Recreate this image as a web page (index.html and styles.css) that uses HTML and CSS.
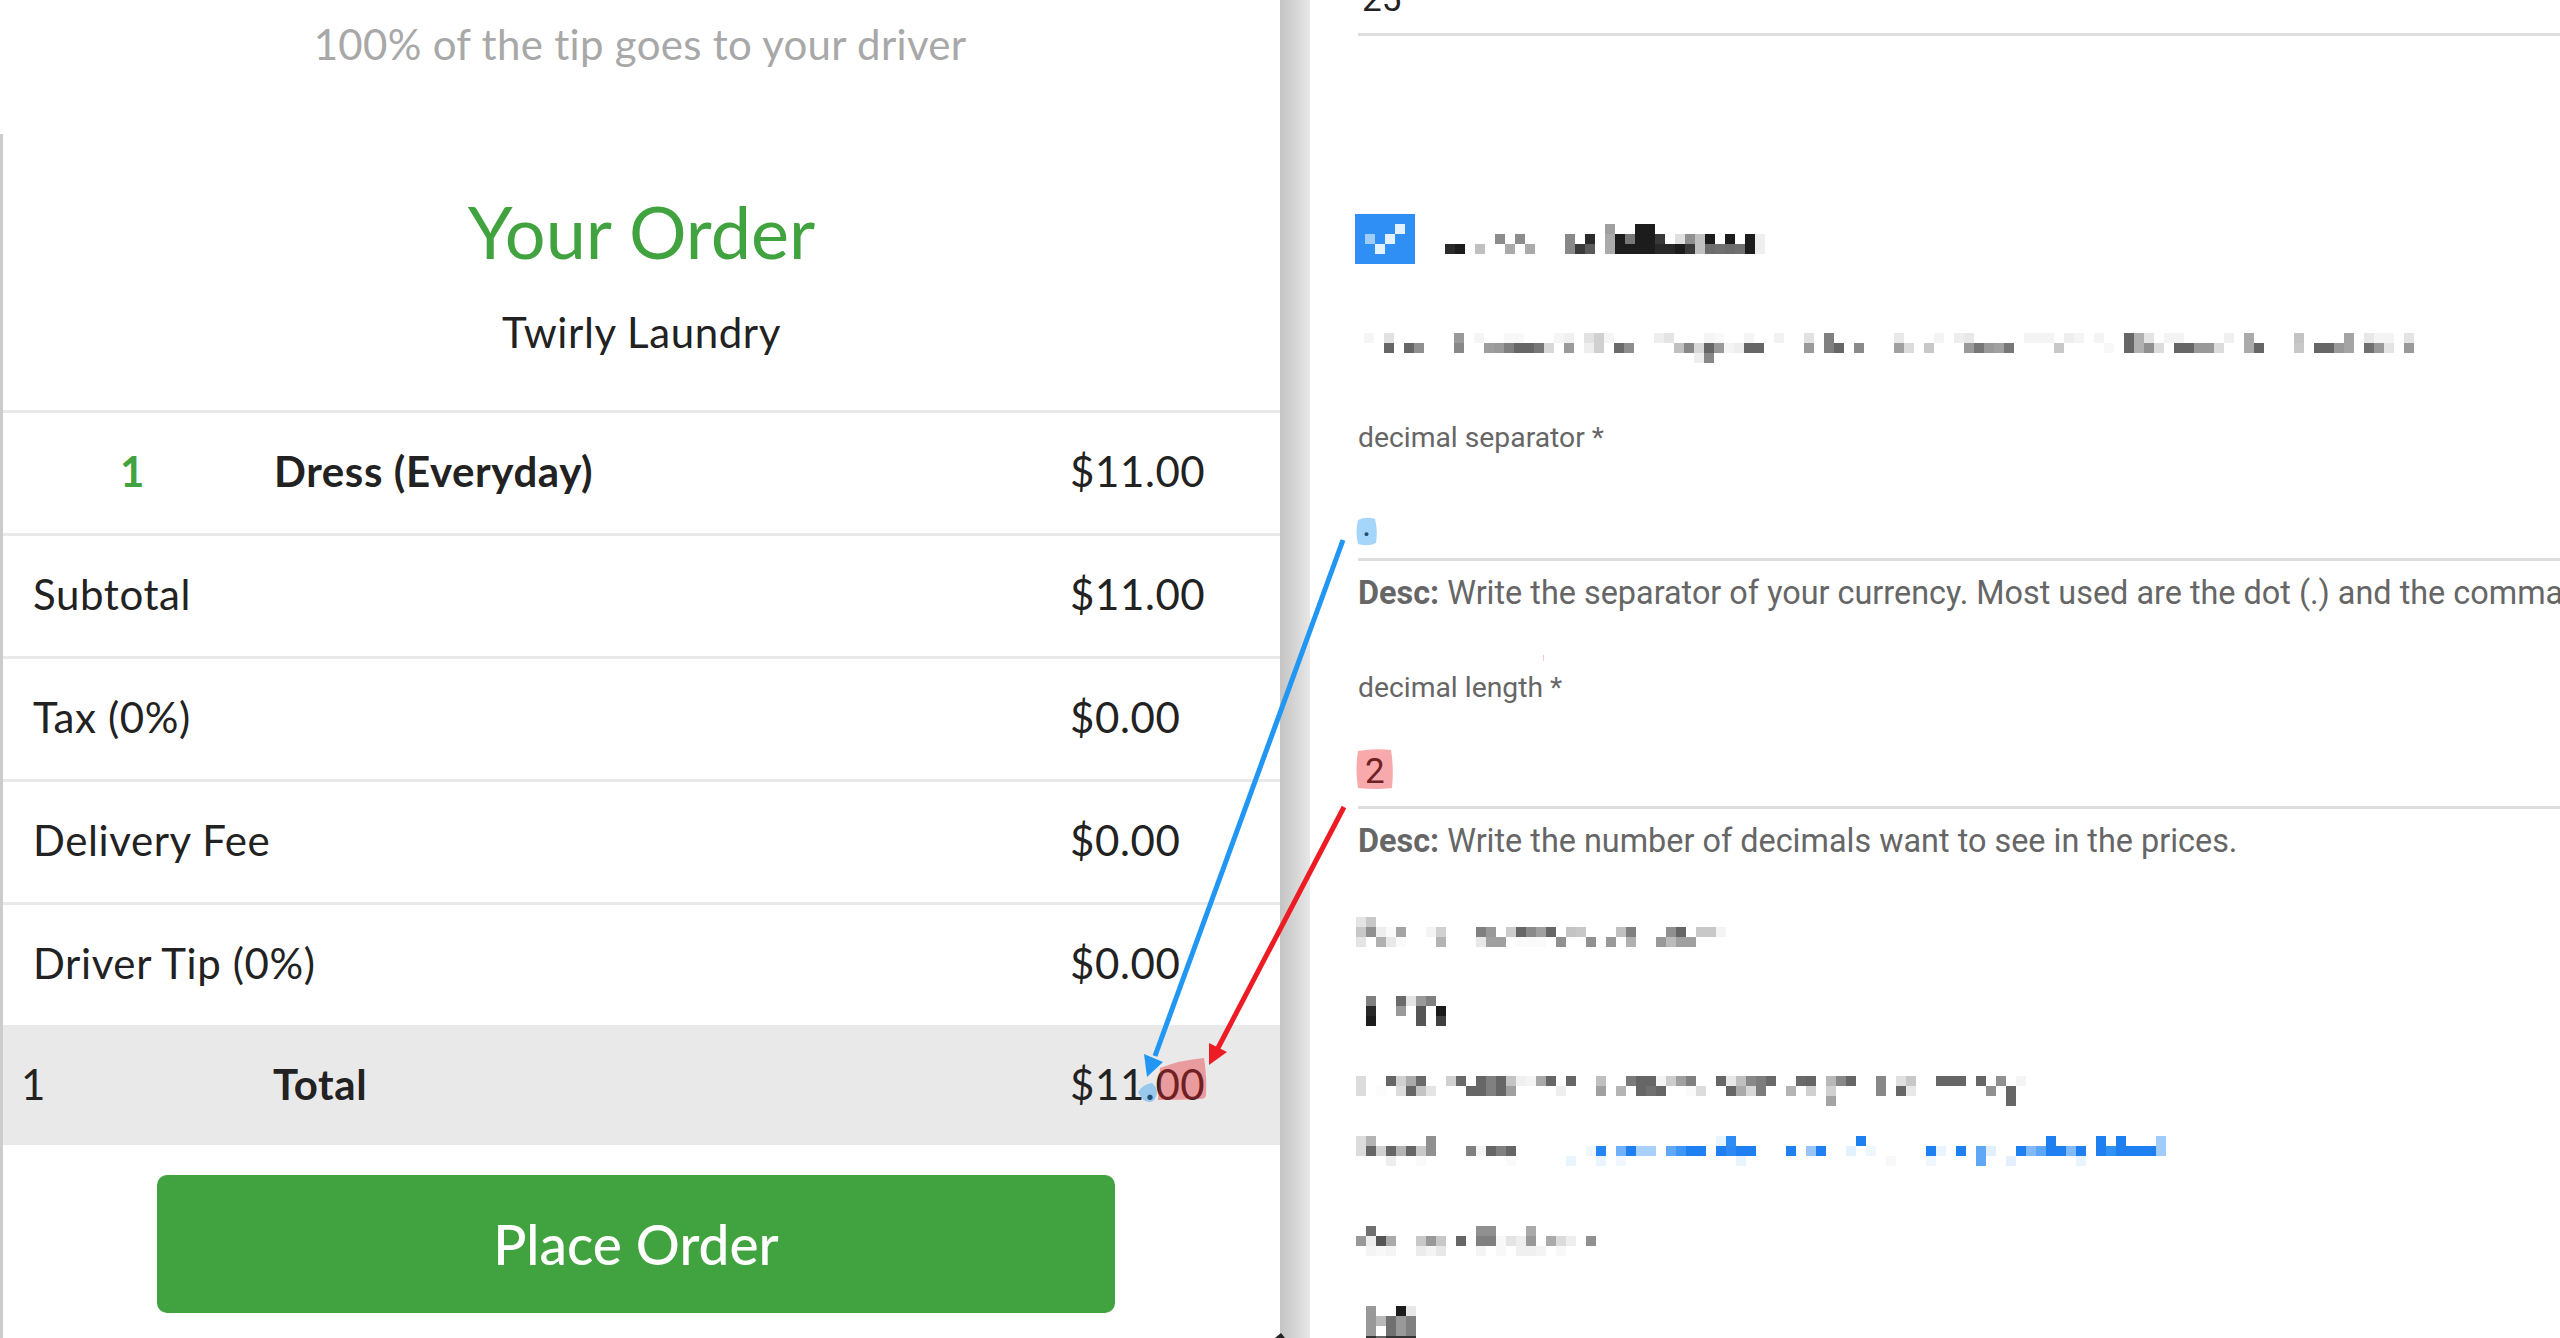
FILE: index.html
```html
<!DOCTYPE html>
<html lang="en">
<head>
<meta charset="utf-8">
<title>Your Order</title>
<link rel="stylesheet" href="styles.css">
</head>
<body>
<main class="page">
  <section class="order">
    <p class="tip-note">100% of the tip goes to your driver</p>
    <div class="order-card">
      <h1 class="order-title">Your Order</h1>
      <p class="order-shop">Twirly Laundry</p>
      <div class="row row-item"><span class="qty">1</span><span class="label strong">Dress (Everyday)</span><span class="amount">$11.00</span></div>
      <div class="row row-sum"><span class="label">Subtotal</span><span class="amount">$11.00</span></div>
      <div class="row row-sum"><span class="label">Tax (0%)</span><span class="amount">$0.00</span></div>
      <div class="row row-sum"><span class="label">Delivery Fee</span><span class="amount">$0.00</span></div>
      <div class="row row-sum"><span class="label">Driver Tip (0%)</span><span class="amount">$0.00</span></div>
      <div class="row row-total"><span class="qty-total">1</span><span class="label strong">Total</span><span class="amount">$11.00</span></div>
      <button class="place-order" type="button">Place Order</button>
    </div>
  </section>
  <div class="gutter"></div>
  <section class="settings">
    <div class="value value-first">25</div>

    <div class="brand">
      <svg class="mosaic logo" width="60" height="50" viewBox="0 0 6 5">
        <rect class="logo-bg" x="0" y="0"/>
        <rect x="4" y="1" fill="#e4f1fe"/><rect x="1" y="2" fill="#a0ccfb"/><rect x="3" y="2" fill="#e4f1fe"/><rect x="2" y="3" fill="#e4f1fe"/>
      </svg>
      <svg class="mosaic brand-name" width="320" height="30" viewBox="0 0 32 3">
        <rect x="16" y="0" fill="#a0a0a0"/><rect x="19" y="0" fill="#1c1c1c"/><rect x="20" y="0" fill="#1c1c1c"/>
        <rect x="5" y="1" fill="#8c8c8c"/><rect x="7" y="1" fill="#8c8c8c"/><rect x="12" y="1" fill="#888"/><rect x="14" y="1" fill="#2a2a2a"/><rect x="16" y="1" fill="#aaa"/><rect x="17" y="1" fill="#1c1c1c"/><rect x="18" y="1" fill="#777"/><rect x="19" y="1" fill="#1c1c1c"/><rect x="20" y="1" fill="#1c1c1c"/><rect x="21" y="1" fill="#383838"/><rect x="23" y="1" fill="#e0e0e0"/><rect x="24" y="1" fill="#909090"/><rect x="25" y="1" fill="#c0c0c0"/><rect x="26" y="1" fill="#1c1c1c"/><rect x="28" y="1" fill="#1c1c1c"/><rect x="30" y="1" fill="#1c1c1c"/><rect x="31" y="1" fill="#eee"/>
        <rect x="0" y="2" fill="#2a2a2a"/><rect x="1" y="2" fill="#1c1c1c"/><rect x="3" y="2" fill="#c0c0c0"/><rect x="6" y="2" fill="#aaa"/><rect x="8" y="2" fill="#aaa"/><rect x="12" y="2" fill="#888"/><rect x="13" y="2" fill="#3a3a3a"/><rect x="14" y="2" fill="#5a5a5a"/><rect x="16" y="2" fill="#aaa"/><rect x="17" y="2" fill="#1c1c1c"/><rect x="18" y="2" fill="#1c1c1c"/><rect x="19" y="2" fill="#1c1c1c"/><rect x="20" y="2" fill="#1c1c1c"/><rect x="21" y="2" fill="#282828"/><rect x="22" y="2" fill="#282828"/><rect x="23" y="2" fill="#1c1c1c"/><rect x="24" y="2" fill="#3a3a3a"/><rect x="25" y="2" fill="#c0c0c0"/><rect x="26" y="2" fill="#6c6c6c"/><rect x="27" y="2" fill="#707070"/><rect x="28" y="2" fill="#6c6c6c"/><rect x="29" y="2" fill="#707070"/><rect x="30" y="2" fill="#1c1c1c"/><rect x="31" y="2" fill="#eee"/>
      </svg>
    </div>

    <svg class="mosaic brand-desc" width="1060" height="30" viewBox="0 0 106 3">
      <rect x="0" y="0" fill="#f5f5f5"/><rect x="2" y="0" fill="#e2e2e2"/><rect x="9" y="0" fill="#9a9a9a"/><rect x="11" y="0" fill="#f5f5f5"/><rect x="14" y="0" fill="#f8f8f8"/><rect x="15" y="0" fill="#f8f8f8"/><rect x="19" y="0" fill="#f5f5f5"/><rect x="20" y="0" fill="#f0f0f0"/><rect x="22" y="0" fill="#e2e2e2"/><rect x="23" y="0" fill="#d0d0d0"/><rect x="24" y="0" fill="#f5f5f5"/><rect x="29" y="0" fill="#eee"/><rect x="30" y="0" fill="#e4e4e4"/><rect x="34" y="0" fill="#f5f5f5"/><rect x="35" y="0" fill="#f8f8f8"/><rect x="38" y="0" fill="#f5f5f5"/><rect x="41" y="0" fill="#f2f2f2"/><rect x="44" y="0" fill="#e2e2e2"/><rect x="46" y="0" fill="#808080"/><rect x="53" y="0" fill="#e8e8e8"/><rect x="57" y="0" fill="#f4f4f4"/><rect x="59" y="0" fill="#eee"/><rect x="60" y="0" fill="#e8e8e8"/><rect x="66" y="0" fill="#f4f4f4"/><rect x="67" y="0" fill="#f4f4f4"/><rect x="68" y="0" fill="#f4f4f4"/><rect x="70" y="0" fill="#eee"/><rect x="71" y="0" fill="#f4f4f4"/><rect x="73" y="0" fill="#f4f4f4"/><rect x="76" y="0" fill="#666"/><rect x="77" y="0" fill="#b0b0b0"/><rect x="78" y="0" fill="#e4e4e4"/><rect x="80" y="0" fill="#f4f4f4"/><rect x="81" y="0" fill="#f4f4f4"/><rect x="86" y="0" fill="#f0f0f0"/><rect x="88" y="0" fill="#aaa"/><rect x="93" y="0" fill="#c4c4c4"/><rect x="98" y="0" fill="#a4a4a4"/><rect x="100" y="0" fill="#e8e8e8"/><rect x="101" y="0" fill="#f4f4f4"/><rect x="102" y="0" fill="#f4f4f4"/><rect x="104" y="0" fill="#e4e4e4"/>
      <rect x="2" y="1" fill="#666"/><rect x="4" y="1" fill="#666"/><rect x="5" y="1" fill="#909090"/><rect x="9" y="1" fill="#888"/><rect x="12" y="1" fill="#9e9e9e"/><rect x="13" y="1" fill="#9a9a9a"/><rect x="14" y="1" fill="#808080"/><rect x="15" y="1" fill="#666"/><rect x="16" y="1" fill="#666"/><rect x="17" y="1" fill="#777"/><rect x="18" y="1" fill="#d8d8d8"/><rect x="20" y="1" fill="#9a9a9a"/><rect x="22" y="1" fill="#eee"/><rect x="23" y="1" fill="#d0d0d0"/><rect x="25" y="1" fill="#6a6a6a"/><rect x="26" y="1" fill="#8e8e8e"/><rect x="31" y="1" fill="#c0c0c0"/><rect x="32" y="1" fill="#888"/><rect x="33" y="1" fill="#d8d8d8"/><rect x="34" y="1" fill="#666"/><rect x="35" y="1" fill="#999"/><rect x="36" y="1" fill="#f4f4f4"/><rect x="37" y="1" fill="#eee"/><rect x="38" y="1" fill="#666"/><rect x="39" y="1" fill="#666"/><rect x="44" y="1" fill="#999"/><rect x="46" y="1" fill="#808080"/><rect x="47" y="1" fill="#666"/><rect x="49" y="1" fill="#8a8a8a"/><rect x="53" y="1" fill="#a0a0a0"/><rect x="54" y="1" fill="#dcdcdc"/><rect x="56" y="1" fill="#c8c8c8"/><rect x="60" y="1" fill="#9a9a9a"/><rect x="61" y="1" fill="#777"/><rect x="62" y="1" fill="#999"/><rect x="63" y="1" fill="#a0a0a0"/><rect x="64" y="1" fill="#777"/><rect x="69" y="1" fill="#c8c8c8"/><rect x="74" y="1" fill="#f8f8f8"/><rect x="76" y="1" fill="#666"/><rect x="77" y="1" fill="#b0b0b0"/><rect x="78" y="1" fill="#909090"/><rect x="79" y="1" fill="#dcdcdc"/><rect x="81" y="1" fill="#666"/><rect x="82" y="1" fill="#666"/><rect x="83" y="1" fill="#999"/><rect x="84" y="1" fill="#999"/><rect x="85" y="1" fill="#dcdcdc"/><rect x="88" y="1" fill="#aaa"/><rect x="89" y="1" fill="#666"/><rect x="93" y="1" fill="#c8c8c8"/><rect x="95" y="1" fill="#666"/><rect x="96" y="1" fill="#666"/><rect x="97" y="1" fill="#999"/><rect x="98" y="1" fill="#a4a4a4"/><rect x="100" y="1" fill="#707070"/><rect x="101" y="1" fill="#999"/><rect x="102" y="1" fill="#e4e4e4"/><rect x="104" y="1" fill="#999"/>
      <rect x="33" y="2" fill="#eee"/><rect x="34" y="2" fill="#888"/>
    </svg>

    <div class="field field-first">
      <label class="field-label">decimal separator *</label>
      <div class="value value-dot">.</div>
      <p class="field-desc"><strong>Desc:</strong> Write the separator of your currency. Most used are the dot (.) and the comma (,).</p>
    </div>

    <div class="field field-second">
      <label class="field-label">decimal length *</label>
      <div class="value value-two">2</div>
      <p class="field-desc"><strong>Desc:</strong> Write the number of decimals want to see in the prices.</p>
    </div>

    <svg class="mosaic blur-label" width="370" height="30" viewBox="0 0 37 3">
      <rect x="0" y="0" fill="#e4e4e4"/><rect x="1" y="0" fill="#c8c8c8"/>
      <rect x="0" y="1" fill="#c8c8c8"/><rect x="1" y="1" fill="#909090"/><rect x="2" y="1" fill="#eee"/><rect x="3" y="1" fill="#fafafa"/><rect x="4" y="1" fill="#a4a4a4"/><rect x="7" y="1" fill="#f4f4f4"/><rect x="8" y="1" fill="#d0d0d0"/><rect x="12" y="1" fill="#808080"/><rect x="13" y="1" fill="#999"/><rect x="15" y="1" fill="#ccc"/><rect x="16" y="1" fill="#666"/><rect x="17" y="1" fill="#8a8a8a"/><rect x="18" y="1" fill="#a0a0a0"/><rect x="19" y="1" fill="#666"/><rect x="21" y="1" fill="#c4c4c4"/><rect x="22" y="1" fill="#c8c8c8"/><rect x="26" y="1" fill="#c0c0c0"/><rect x="27" y="1" fill="#808080"/><rect x="31" y="1" fill="#909090"/><rect x="32" y="1" fill="#666"/><rect x="34" y="1" fill="#c8c8c8"/><rect x="35" y="1" fill="#c8c8c8"/><rect x="36" y="1" fill="#f4f4f4"/>
      <rect x="0" y="2" fill="#e4e4e4"/><rect x="2" y="2" fill="#b0b0b0"/><rect x="3" y="2" fill="#e8e8e8"/><rect x="4" y="2" fill="#fafafa"/><rect x="8" y="2" fill="#b4b4b4"/><rect x="12" y="2" fill="#e8e8e8"/><rect x="13" y="2" fill="#a0a0a0"/><rect x="14" y="2" fill="#a0a0a0"/><rect x="16" y="2" fill="#fafafa"/><rect x="17" y="2" fill="#fafafa"/><rect x="18" y="2" fill="#fafafa"/><rect x="20" y="2" fill="#909090"/><rect x="23" y="2" fill="#909090"/><rect x="25" y="2" fill="#999"/><rect x="27" y="2" fill="#b0b0b0"/><rect x="30" y="2" fill="#999"/><rect x="31" y="2" fill="#bbb"/><rect x="32" y="2" fill="#a0a0a0"/><rect x="33" y="2" fill="#a0a0a0"/>
    </svg>

    <svg class="mosaic blur-value" width="90" height="30" viewBox="0 0 9 3">
      <rect x="1" y="0" fill="#808080"/><rect x="4" y="0" fill="#6a6a6a"/><rect x="5" y="0" fill="#e4e4e4"/><rect x="6" y="0" fill="#999"/><rect x="7" y="0" fill="#808080"/>
      <rect x="1" y="1" fill="#282828"/><rect x="4" y="1" fill="#999"/><rect x="6" y="1" fill="#555"/><rect x="8" y="1" fill="#1a1a1a"/>
      <rect x="1" y="2" fill="#1c1c1c"/><rect x="6" y="2" fill="#555"/><rect x="8" y="2" fill="#404040"/>
    </svg>

    <svg class="mosaic blur-line" width="670" height="30" viewBox="0 0 67 3">
      <rect x="0" y="0" fill="#dcdcdc"/><rect x="3" y="0" fill="#666"/><rect x="4" y="0" fill="#d0d0d0"/><rect x="5" y="0" fill="#aaa"/><rect x="6" y="0" fill="#6a6a6a"/><rect x="9" y="0" fill="#d0d0d0"/><rect x="10" y="0" fill="#6a6a6a"/><rect x="12" y="0" fill="#666"/><rect x="13" y="0" fill="#808080"/><rect x="14" y="0" fill="#666"/><rect x="15" y="0" fill="#c4c4c4"/><rect x="16" y="0" fill="#f0f0f0"/><rect x="17" y="0" fill="#f4f4f4"/><rect x="18" y="0" fill="#a8a8a8"/><rect x="19" y="0" fill="#666"/><rect x="21" y="0" fill="#666"/><rect x="24" y="0" fill="#c0c0c0"/><rect x="27" y="0" fill="#7a7a7a"/><rect x="28" y="0" fill="#666"/><rect x="29" y="0" fill="#666"/><rect x="30" y="0" fill="#f4f4f4"/><rect x="31" y="0" fill="#ccc"/><rect x="32" y="0" fill="#a0a0a0"/><rect x="33" y="0" fill="#808080"/><rect x="36" y="0" fill="#666"/><rect x="37" y="0" fill="#e8e8e8"/><rect x="38" y="0" fill="#c0c0c0"/><rect x="39" y="0" fill="#888"/><rect x="40" y="0" fill="#7c7c7c"/><rect x="41" y="0" fill="#6a6a6a"/><rect x="44" y="0" fill="#6a6a6a"/><rect x="45" y="0" fill="#666"/><rect x="47" y="0" fill="#b8b8b8"/><rect x="48" y="0" fill="#888"/><rect x="49" y="0" fill="#666"/><rect x="52" y="0" fill="#888"/><rect x="54" y="0" fill="#e0e0e0"/><rect x="55" y="0" fill="#c8c8c8"/><rect x="58" y="0" fill="#666"/><rect x="59" y="0" fill="#666"/><rect x="60" y="0" fill="#666"/><rect x="62" y="0" fill="#666"/><rect x="64" y="0" fill="#909090"/><rect x="66" y="0" fill="#f4f4f4"/>
      <rect x="0" y="1" fill="#dcdcdc"/><rect x="2" y="1" fill="#fcfcfc"/><rect x="4" y="1" fill="#dcdcdc"/><rect x="5" y="1" fill="#666"/><rect x="6" y="1" fill="#c4c4c4"/><rect x="7" y="1" fill="#e4e4e4"/><rect x="11" y="1" fill="#666"/><rect x="12" y="1" fill="#666"/><rect x="13" y="1" fill="#808080"/><rect x="14" y="1" fill="#666"/><rect x="15" y="1" fill="#a0a0a0"/><rect x="20" y="1" fill="#eee"/><rect x="24" y="1" fill="#a0a0a0"/><rect x="26" y="1" fill="#b4b4b4"/><rect x="28" y="1" fill="#666"/><rect x="29" y="1" fill="#707070"/><rect x="30" y="1" fill="#666"/><rect x="33" y="1" fill="#fafafa"/><rect x="34" y="1" fill="#dcdcdc"/><rect x="37" y="1" fill="#666"/><rect x="38" y="1" fill="#aaa"/><rect x="39" y="1" fill="#d8d8d8"/><rect x="40" y="1" fill="#7c7c7c"/><rect x="43" y="1" fill="#b4b4b4"/><rect x="45" y="1" fill="#d0d0d0"/><rect x="47" y="1" fill="#d0d0d0"/><rect x="52" y="1" fill="#888"/><rect x="54" y="1" fill="#666"/><rect x="55" y="1" fill="#e8e8e8"/><rect x="63" y="1" fill="#909090"/><rect x="65" y="1" fill="#666"/>
      <rect x="47" y="2" fill="#a4a4a4"/><rect x="65" y="2" fill="#666"/>
    </svg>

    <svg class="mosaic blur-link" width="810" height="30" viewBox="0 0 81 3">
      <rect x="0" y="0" fill="#dcdcdc"/><rect x="1" y="0" fill="#b4b4b4"/><rect x="7" y="0" fill="#909090"/><rect x="36" y="0" fill="#e8f4fe"/><rect x="37" y="0" fill="#2f8cf5"/><rect x="50" y="0" fill="#1e80f0"/><rect x="69" y="0" fill="#1e80f0"/><rect x="74" y="0" fill="#1e80f0"/><rect x="76" y="0" fill="#1e80f0"/><rect x="80" y="0" fill="#a0ccfb"/>
      <rect x="0" y="1" fill="#dcdcdc"/><rect x="1" y="1" fill="#666"/><rect x="2" y="1" fill="#d0d0d0"/><rect x="3" y="1" fill="#666"/><rect x="4" y="1" fill="#b4b4b4"/><rect x="5" y="1" fill="#666"/><rect x="6" y="1" fill="#c8c8c8"/><rect x="7" y="1" fill="#909090"/><rect x="11" y="1" fill="#808080"/><rect x="12" y="1" fill="#f4f4f4"/><rect x="13" y="1" fill="#666"/><rect x="14" y="1" fill="#808080"/><rect x="15" y="1" fill="#666"/><rect x="23" y="1" fill="#eef6fe"/><rect x="24" y="1" fill="#2585f2"/><rect x="26" y="1" fill="#70b0f8"/><rect x="27" y="1" fill="#1e80f0"/><rect x="28" y="1" fill="#a8d0fb"/><rect x="29" y="1" fill="#a8d0fb"/><rect x="31" y="1" fill="#60a8f6"/><rect x="32" y="1" fill="#3f96f5"/><rect x="33" y="1" fill="#1e80f0"/><rect x="34" y="1" fill="#1e80f0"/><rect x="36" y="1" fill="#1e80f0"/><rect x="37" y="1" fill="#2c88f2"/><rect x="38" y="1" fill="#1e80f0"/><rect x="39" y="1" fill="#1e80f0"/><rect x="43" y="1" fill="#1e80f0"/><rect x="45" y="1" fill="#98c4fa"/><rect x="46" y="1" fill="#1e80f0"/><rect x="49" y="1" fill="#e4f2fe"/><rect x="51" y="1" fill="#eef6fe"/><rect x="57" y="1" fill="#1e80f0"/><rect x="58" y="1" fill="#e8f4fe"/><rect x="60" y="1" fill="#1e80f0"/><rect x="62" y="1" fill="#60a8f6"/><rect x="63" y="1" fill="#e0eefe"/><rect x="66" y="1" fill="#1e80f0"/><rect x="67" y="1" fill="#80b8f8"/><rect x="68" y="1" fill="#5ca6f6"/><rect x="69" y="1" fill="#1e80f0"/><rect x="70" y="1" fill="#1e80f0"/><rect x="71" y="1" fill="#80b8f8"/><rect x="72" y="1" fill="#1e80f0"/><rect x="74" y="1" fill="#1e80f0"/><rect x="75" y="1" fill="#3090f4"/><rect x="76" y="1" fill="#1e80f0"/><rect x="77" y="1" fill="#1e80f0"/><rect x="78" y="1" fill="#1e80f0"/><rect x="79" y="1" fill="#1e80f0"/><rect x="80" y="1" fill="#a0ccfb"/>
      <rect x="3" y="2" fill="#eee"/><rect x="6" y="2" fill="#fafafa"/><rect x="15" y="2" fill="#fafafa"/><rect x="21" y="2" fill="#e8f4fe"/><rect x="24" y="2" fill="#eaf4fe"/><rect x="26" y="2" fill="#f0f7fe"/><rect x="38" y="2" fill="#e8f4fe"/><rect x="53" y="2" fill="#f8f8f8"/><rect x="57" y="2" fill="#eef6fe"/><rect x="62" y="2" fill="#60a8f6"/><rect x="65" y="2" fill="#e4f0fe"/><rect x="72" y="2" fill="#e8f4fe"/>
    </svg>

    <svg class="mosaic blur-sub" width="240" height="30" viewBox="0 0 24 3">
      <rect x="1" y="0" fill="#707070"/><rect x="12" y="0" fill="#909090"/><rect x="13" y="0" fill="#909090"/><rect x="17" y="0" fill="#aaa"/>
      <rect x="0" y="1" fill="#999"/><rect x="1" y="1" fill="#eee"/><rect x="2" y="1" fill="#555"/><rect x="3" y="1" fill="#aaa"/><rect x="6" y="1" fill="#c8c8c8"/><rect x="7" y="1" fill="#999"/><rect x="8" y="1" fill="#c8c8c8"/><rect x="10" y="1" fill="#666"/><rect x="12" y="1" fill="#808080"/><rect x="13" y="1" fill="#808080"/><rect x="14" y="1" fill="#f8f8f8"/><rect x="15" y="1" fill="#e4e4e4"/><rect x="16" y="1" fill="#eee"/><rect x="17" y="1" fill="#999"/><rect x="19" y="1" fill="#aaa"/><rect x="20" y="1" fill="#dcdcdc"/><rect x="21" y="1" fill="#eee"/><rect x="23" y="1" fill="#909090"/>
      <rect x="1" y="2" fill="#f4f4f4"/><rect x="2" y="2" fill="#f8f8f8"/><rect x="3" y="2" fill="#f4f4f4"/><rect x="6" y="2" fill="#ececec"/><rect x="7" y="2" fill="#f4f4f4"/><rect x="8" y="2" fill="#e8e8e8"/><rect x="12" y="2" fill="#f4f4f4"/><rect x="14" y="2" fill="#f8f8f8"/><rect x="16" y="2" fill="#f0f0f0"/><rect x="17" y="2" fill="#f0f0f0"/><rect x="18" y="2" fill="#f4f4f4"/><rect x="20" y="2" fill="#f8f8f8"/>
    </svg>

    <svg class="mosaic blur-last" width="60" height="40" viewBox="0 0 6 4">
      <rect x="1" y="0" fill="#999"/><rect x="4" y="0" fill="#1c1c1c"/><rect x="5" y="0" fill="#e8e8e8"/>
      <rect x="1" y="1" fill="#999"/><rect x="2" y="1" fill="#b8b8b8"/><rect x="3" y="1" fill="#707070"/><rect x="4" y="1" fill="#999"/><rect x="5" y="1" fill="#808080"/>
      <rect x="1" y="2" fill="#999"/><rect x="3" y="2" fill="#707070"/><rect x="4" y="2" fill="#999"/><rect x="5" y="2" fill="#808080"/>
      <rect x="1" y="3" fill="#333"/><rect x="2" y="3" fill="#666"/><rect x="3" y="3" fill="#333"/><rect x="4" y="3" fill="#333"/><rect x="5" y="3" fill="#333"/>
    </svg>
  </section>
</main>

<svg class="annotations" width="2560" height="1338" viewBox="0 0 2560 1338" aria-hidden="true">
  <path class="blob-blue" d="M1358 520q8-4 17-1q3 12 1 24q-8 4-18 1q-3-12 0-24z"/>
  <path class="blob-blue" d="M1138 1092q5-8 14-9q5 4 5 10q-1 7-6 9q-8 1-13-10z"/>
  <path class="blob-red" d="M1358 751q16-3 33-1q3 18 1 38q-16 2-34 0q-3-18 0-37z"/>
  <path class="blob-red" d="M1160 1068q20-8 44-10q3 18 2 38q-1 3-6 3q-20 1-42 1q1-16 2-32z"/>
  <line class="arrow-blue" x1="1343" y1="540" x2="1155" y2="1056"/>
  <polygon class="head-blue" points="1144,1054 1163,1062 1147,1077"/>
  <line class="arrow-red" x1="1344" y1="807" x2="1218" y2="1048"/>
  <polygon class="head-red" points="1209,1043 1227,1052 1209,1065"/>
  <rect class="speck" x="1543" y="655" width="1" height="6"/>
  <polygon class="corner" points="1275,1338 1281,1333 1285,1338"/>
</svg>
</body>
</html>
```
FILE: styles.css
```css
* { box-sizing: border-box; }
html, body { margin: 0; padding: 0; height: 1338px; overflow: hidden; background: #fff; }
body { position: relative; }

.page { display: flex; width: 2560px; height: 1338px; overflow: hidden; }

/* Order panel */
.order {
  width: 1280px;
  flex: none;
  background: #fff;
  font-family: "Lato", "Noto Sans", sans-serif;
  color: #222;
  border-bottom-right-radius: 10px;
}
.tip-note {
  margin: 0;
  height: 134px;
  padding-top: 18px;
  text-align: center;
  font-size: 42px;
  letter-spacing: .3px;
  line-height: 52px;
  color: #a8a8a8;
}
.order-card { border-left: 3px solid #ccc; height: 1204px; }
.order-title {
  margin: 0;
  padding-top: 57px;
  text-align: center;
  font-size: 72px;
  line-height: 80px;
  font-weight: 400;
  color: #41a33f;
}
.order-shop {
  margin: 0;
  padding-top: 36px;
  height: 139px;
  text-align: center;
  font-size: 42px;
  letter-spacing: .6px;
  line-height: 50px;
  color: #222;
}
.row {
  display: flex;
  align-items: center;
  height: 123px;
  padding-bottom: 5px;
  border-top: 3px solid #e9e9e9;
  font-size: 42px;
  letter-spacing: .6px;
}
.row .label { flex: 1; }
.row .amount { width: 210px; flex: none; }
.strong { font-weight: 700; }
.row-item { padding-left: 117px; }
.qty { width: 154px; flex: none; color: #41a33f; font-weight: 700; }
.row-sum { padding-left: 30px; }
.row-total {
  height: 120px;
  padding-bottom: 3px;
  border-top: 0;
  background: #e9e9e9;
  padding-left: 18px;
}
.qty-total { width: 252px; flex: none; }
.place-order {
  display: block;
  width: 958px;
  height: 138px;
  margin: 30px 0 0 154px;
  border: 0;
  border-radius: 10px;
  background: #41a33f;
  color: #fff;
  font-family: inherit;
  font-size: 55px;
  font-weight: 500;
}

.gutter {
  width: 30px;
  flex: none;
  background: linear-gradient(to right, #c4c4c4, #d8d8d8 60%, #e8e8e8);
}

/* Settings panel */
.settings {
  flex: 1;
  min-width: 0;
  padding-left: 48px;
  font-family: "Roboto", "Liberation Sans", sans-serif;
  color: #666;
}
.value {
  border-bottom: 3px solid #ddd;
  padding-left: 4px;
  font-size: 35px;
  color: #222;
}
.value-first { height: 36px; line-height: 0; }
.brand { display: flex; gap: 30px; margin: 178px 0 0 -3px; align-items: flex-start; }
.mosaic { display: block; }
.mosaic rect { width: 1px; height: 1px; }
.mosaic .logo-bg { width: 6px; height: 5px; fill: #2f8ff5; }
.brand-name { margin-top: 10px; }
.brand-desc { margin: 69px 0 0 6px; }
.field-label { display: block; font-size: 28.3px; line-height: 32px; color: #666; }
.field-first { margin-top: 59px; }
.field-second { margin-top: 58px; }
.value-dot { margin-top: 44px; height: 63px; line-height: 54px; }
.value-two { margin-top: 42px; height: 63px; line-height: 52px; padding-left: 7px; }
.field-desc {
  margin: 11px 0 0;
  font-size: 32.4px;
  line-height: 42px;
  white-space: nowrap;
  color: #666;
}
.blur-label { margin: 55px 0 0 -2px; }
.blur-value { margin: 49px 0 0 -2px; }
.blur-line { margin: 50px 0 0 -2px; }
.blur-link { margin: 30px 0 0 -2px; }
.blur-sub { margin: 60px 0 0 -2px; }
.blur-last { margin: 50px 0 0 -2px; }

/* Annotation overlay */
.annotations { position: absolute; left: 0; top: 0; pointer-events: none; }
.blob-blue { fill: #2196f3; opacity: .4; }
.blob-red { fill: #ed1c24; opacity: .38; }
.arrow-blue { stroke: #2196f3; stroke-width: 5; }
.arrow-red { stroke: #ed1c24; stroke-width: 5; }
.head-blue { fill: #2196f3; }
.head-red { fill: #ed1c24; }
.speck { fill: #f8c8cc; }
.corner { fill: #222; }
```
